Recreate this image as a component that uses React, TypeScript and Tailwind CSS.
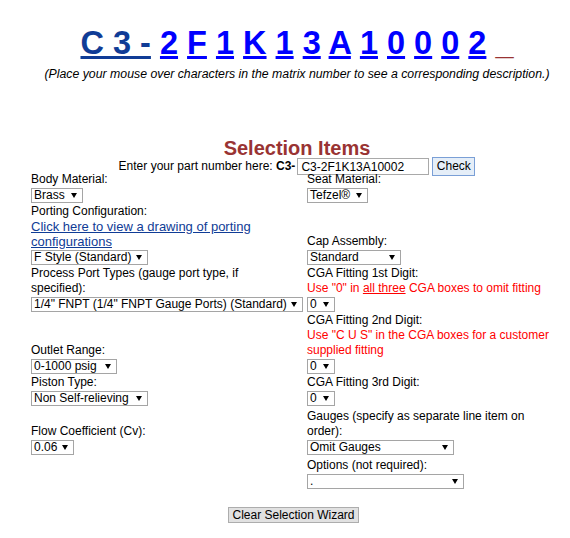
import React, { Fragment } from "react";

function Arrow() {
  return (
    <svg width="6" height="5" viewBox="0 0 6 5" className="shrink-0">
      <polygon points="0,0 6,0 3,5" fill="#000" />
    </svg>
  );
}

function Sel({ w, text, extra = "" }: { w: string; text: string; extra?: string }) {
  return (
    <div className={`h-[17px] pt-[1px] ${extra}`}>
      <div
        className={`flex h-[15px] items-center justify-between border border-[#a5a5a5] bg-white pl-[2px] pr-[5px] ${w}`}
      >
        <span className="whitespace-nowrap text-[12px] leading-[13px]">{text}</span>
        <Arrow />
      </div>
    </div>
  );
}

function Label({ children }: { children: React.ReactNode }) {
  return <div className="text-[12px] leading-[15px]">{children}</div>;
}

function Red({ children }: { children: React.ReactNode }) {
  return <div className="text-[12px] leading-[15px] text-[#ff0000]">{children}</div>;
}

export default function App() {
  const chars = ["2", "F", "1", "K", "1", "3", "A", "1", "0", "0", "0", "2"];
  return (
    <div className="w-[570px] bg-white pl-[24px] pt-[25px] pb-[14px] font-['Liberation_Sans',Arial,sans-serif] text-black">
      <div className="whitespace-nowrap text-center text-[32.5px] font-bold leading-[37px]">
        <a className="text-[#103c96] underline">C 3 -</a>{" "}
        {chars.map((c, i) => (
          <Fragment key={i}>
            <a className="text-[#0000ff] underline">{c}</a>{" "}
          </Fragment>
        ))}
        <a className="text-[#993333]">_</a>
      </div>
      <div className="mt-[5px] whitespace-nowrap text-center text-[12.3px] italic leading-[15px]">
        (Place your mouse over characters in the matrix number to see a corresponding description.)
      </div>
      <div className="mt-[55px] text-center text-[20px] font-bold leading-[23px] text-[#993333]">
        Selection Items
      </div>
      <div className="-mt-[1px] flex h-[15px] items-center justify-center">
        <span className="whitespace-nowrap text-[12px] leading-[15px]">
          Enter your part number here: <b>C3-</b>
        </span>
        <input
          readOnly
          value="C3-2F1K13A10002"
          className="ml-[2px] h-[17px] w-[132px] shrink-0 border border-[#a9a9a9] bg-white px-[3px] text-[12px] leading-[15px] outline-none"
        />
        <button className="ml-[3px] h-[19px] w-[43px] shrink-0 border border-[#7a9fd6] bg-[#e5eef8] text-[12px] leading-[15px]">
          Check
        </button>
      </div>

      <div className="-mt-[2px] ml-[7px] grid grid-cols-[276px_255px] items-end">
        {/* Row 1 */}
        <div className="w-[255px]">
          <Label>Body Material:</Label>
          <Sel w="w-[52px]" text="Brass" />
        </div>
        <div>
          <Label>Seat Material:</Label>
          <Sel w="w-[61px]" text="Tefzel®" />
        </div>
        {/* Row 2 */}
        <div className="w-[255px]">
          <Label>Porting Configuration:</Label>
          <a className="block text-[13px] leading-[15px] text-[#103c96] underline">
            Click here to view a drawing of porting configurations
          </a>
          <Sel w="w-[117px]" text="F Style (Standard)" />
        </div>
        <div>
          <Label>Cap Assembly:</Label>
          <Sel w="w-[94px]" text="Standard" />
        </div>
        {/* Row 3 */}
        <div className="w-[255px]">
          <Label>Process Port Types (gauge port type, if specified):</Label>
          <Sel w="w-[272px]" text={'1/4" FNPT (1/4" FNPT Gauge Ports) (Standard)'} />
        </div>
        <div>
          <Label>CGA Fitting 1st Digit:</Label>
          <Red>
            Use "0" in <u>all three</u> CGA boxes to omit fitting
          </Red>
          <Sel w="w-[28px]" text="0" />
        </div>
        {/* Row 4 */}
        <div className="w-[255px]">
          <Label>Outlet Range:</Label>
          <Sel w="w-[86px]" text="0-1000 psig" />
        </div>
        <div>
          <Label>CGA Fitting 2nd Digit:</Label>
          <Red>Use "C U S" in the CGA boxes for a customer supplied fitting</Red>
          <Sel w="w-[28px]" text="0" />
        </div>
        {/* Row 5 */}
        <div className="w-[255px]">
          <Label>Piston Type:</Label>
          <Sel w="w-[117px]" text="Non Self-relieving" extra="mb-[2px]" />
        </div>
        <div>
          <Label>CGA Fitting 3rd Digit:</Label>
          <Sel w="w-[28px]" text="0" extra="mb-[2px]" />
        </div>
        {/* Row 6 */}
        <div className="w-[255px]">
          <Label>Flow Coefficient (Cv):</Label>
          <Sel w="w-[43px]" text="0.06" extra="mb-[2px]" />
        </div>
        <div>
          <Label>Gauges (specify as separate line item on order):</Label>
          <Sel w="w-[147px]" text="Omit Gauges" extra="mb-[2px]" />
        </div>
        {/* Row 7 */}
        <div />
        <div>
          <Label>Options (not required):</Label>
          <Sel w="w-[157px]" text="." />
        </div>
      </div>

      <div className="mt-[17px] flex justify-center">
        <button className="mr-[7px] h-[16px] w-[131px] border border-[#adadad] bg-[#e1e1e1] text-[12px] leading-[14px]">
          Clear Selection Wizard
        </button>
      </div>
    </div>
  );
}
